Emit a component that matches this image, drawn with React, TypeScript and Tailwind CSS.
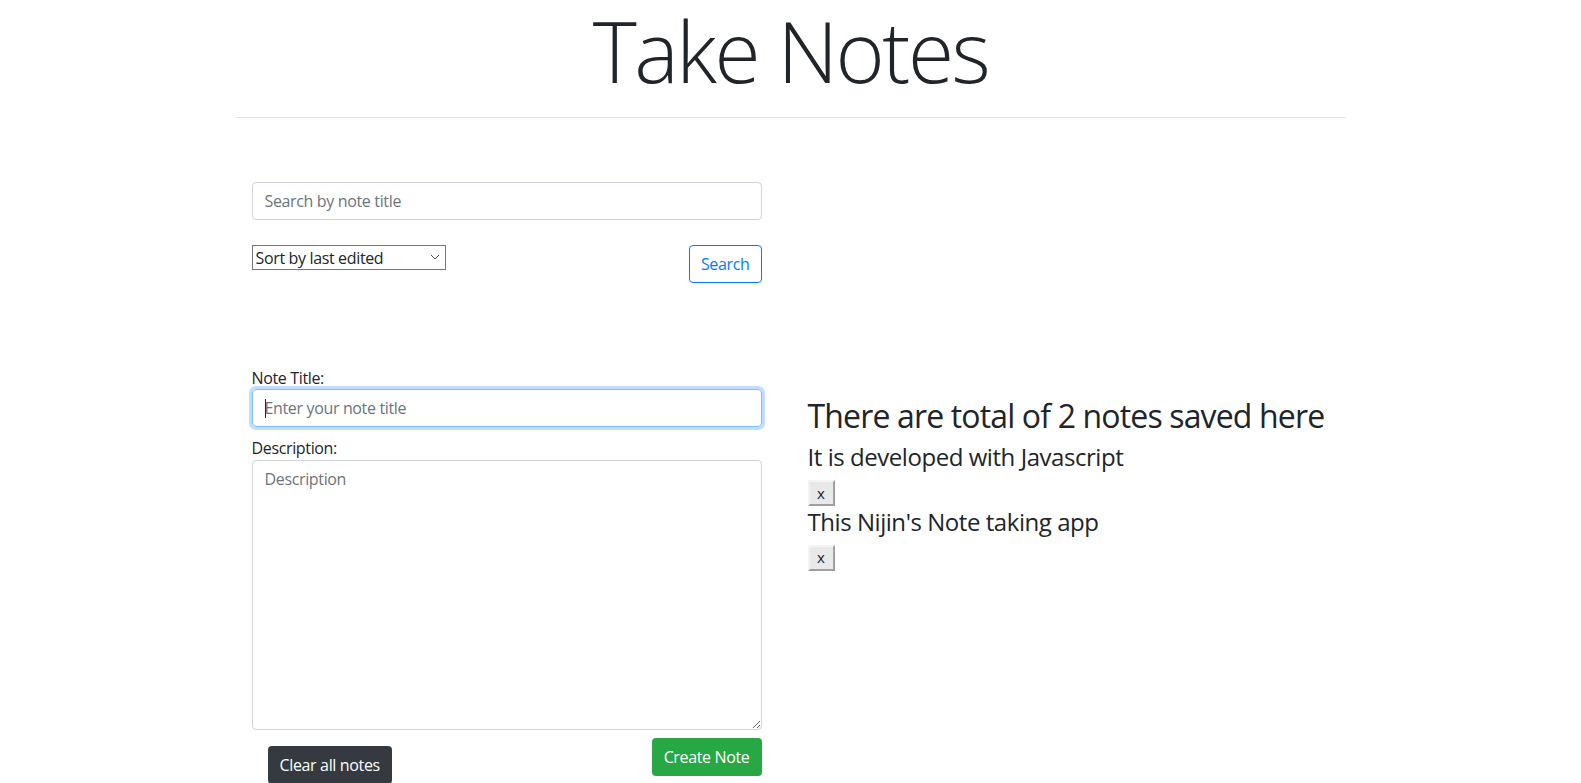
import { useState } from "react";

const notes = [
  { title: "It is developed with Javascript" },
  { title: "This Nijin's Note taking app" },
];

export default function App() {
  const [search, setSearch] = useState("");
  const [title, setTitle] = useState("");
  const [desc, setDesc] = useState("");

  return (
    <div className="min-h-screen bg-white text-[#212529] font-['Open_Sans',sans-serif] text-[16px] leading-[1.5] tracking-[-0.35px] overflow-hidden">
      <div className="w-[1140px] mx-auto">
        <h1 className="text-center text-[84px] font-light leading-[99px] tracking-[-2.5px] mt-[1px]">Take Notes</h1>
        <hr className="mx-[15px] mt-[17px] border-0 border-t border-black/10" />

        <div className="flex">
          {/* left: search + new note form */}
          <div className="w-[541px] pl-[31px] shrink-0">
            <input
              value={search}
              onChange={(e) => setSearch(e.target.value)}
              placeholder="Search by note title"
              className="mt-[64px] block w-[510px] h-[38px] px-[12px] border border-[#ced4da] rounded-[4px] placeholder:text-[#6c757d] outline-none"
            />
            <div className="flex items-start justify-between w-[510px] mt-[25px]">
              <div className="relative">
                <select className="appearance-none block w-[194px] h-[25px] border border-[#767676] bg-white pl-[3px] text-[16px] leading-[22px] outline-none">
                  <option>Sort by last edited</option>
                  <option>Sort by title</option>
                </select>
                <svg className="absolute right-[6px] top-[9px] pointer-events-none" width="10" height="6" viewBox="0 0 10 6">
                  <path d="M1 1l4 4 4-4" fill="none" stroke="#555" strokeWidth="1" />
                </svg>
              </div>
              <button className="h-[38px] px-[11px] border border-[#007bff] text-[#007bff] rounded-[4px]">Search</button>
            </div>

            <label className="block mt-[84px] leading-[22px]">Note Title:</label>
            <div className="relative w-[510px]">
              <input
                value={title}
                onChange={(e) => setTitle(e.target.value)}
                placeholder="Enter your note title"
                className="block w-[510px] h-[38px] px-[12px] border border-[#80bdff] rounded-[4px] shadow-[0_0_0_3px_rgba(0,123,255,0.25)] placeholder:text-[#6c757d] outline-none"
              />
              <span className="absolute left-[13px] top-[10px] w-px h-[19px] bg-[#212529]" />
            </div>

            <label className="block mt-[9px] leading-[24px]">Description:</label>
            <textarea
              value={desc}
              onChange={(e) => setDesc(e.target.value)}
              placeholder="Description"
              className="block w-[510px] h-[270px] px-[12px] py-[6px] border border-[#ced4da] rounded-[4px] placeholder:text-[#6c757d] outline-none"
            />
            <div className="flex items-start w-[510px]">
              <button className="ml-[16px] mt-[16px] h-[38px] px-[12px] bg-[#343a40] text-white rounded-[4px]">Clear all notes</button>
              <button className="ml-auto mt-[8px] h-[38px] px-[12px] bg-[#28a745] text-white rounded-[4px]">Create Note</button>
            </div>
          </div>

          {/* right: saved notes */}
          <div className="pl-[46px] pt-[279px]">
            <h2 className="text-[32px] leading-[1.2] tracking-[-0.85px] mb-[8px]">There are total of {notes.length} notes saved here</h2>
            {notes.map((n) => (
              <div key={n.title}>
                <h4 className="text-[24px] leading-[1.2] tracking-[-0.45px] mb-[8px]">{n.title}</h4>
                <button className="w-[27px] h-[26px] mb-[2px] text-[15px] leading-none tracking-normal bg-[#e9e9e9] border-2 border-t-[#f4f4f4] border-l-[#f4f4f4] border-b-[#a0a0a0] border-r-[#a0a0a0] flex items-center justify-center">x</button>
              </div>
            ))}
          </div>
        </div>
      </div>
    </div>
  );
}
